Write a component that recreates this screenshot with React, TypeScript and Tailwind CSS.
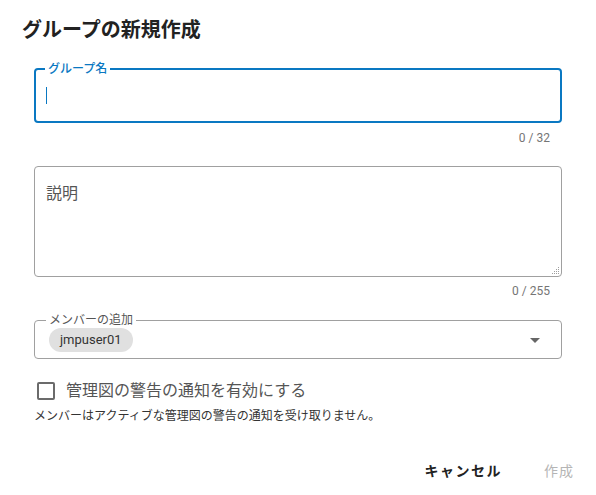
import React from 'react';

const font = { fontFamily: 'Roboto, "Noto Sans CJK JP", sans-serif' };

function ArrowDropDown() {
  return (
    <svg className="w-6 h-6 text-[#666]" viewBox="0 0 24 24" fill="currentColor">
      <path d="M7 10l5 5 5-5z" />
    </svg>
  );
}

function ResizeGrip() {
  return (
    <svg className="w-[9px] h-[9px]" viewBox="0 0 9 9" fill="#9e9e9e">
      <rect x="7" y="1" width="1" height="1" />
      <rect x="5" y="3" width="1" height="1" />
      <rect x="7" y="3" width="1" height="1" />
      <rect x="3" y="5" width="1" height="1" />
      <rect x="5" y="5" width="1" height="1" />
      <rect x="7" y="5" width="1" height="1" />
      <rect x="1" y="7" width="1" height="1" />
      <rect x="3" y="7" width="1" height="1" />
      <rect x="5" y="7" width="1" height="1" />
      <rect x="7" y="7" width="1" height="1" />
    </svg>
  );
}

export default function App() {
  return (
    <div className="w-[596px] h-[495px] bg-white overflow-hidden text-[#222]" style={font}>
      <div className="pt-[16px] pl-[22px] text-[20px] leading-[28px] font-bold text-[#222]">
        グループの新規作成
      </div>

      <div className="pl-[34px] pr-[34px] pt-[17px]">
        {/* group name */}
        <fieldset className="border-2 border-[#0a78c2] rounded-[4px] h-[62px] px-[8px] m-0">
          <legend className="px-[3px] text-[12px] leading-[16px] font-medium text-[#0a78c2] ml-[1px]">
            グループ名
          </legend>
          <div className="w-px h-[17px] bg-[#0a78c2] ml-[2px] mt-[10px]" />
        </fieldset>
        <div className="text-right pr-[12px] text-[12px] leading-[16px] text-[#757575] mt-[7px]">0 / 32</div>

        {/* description */}
        <div className="relative mt-[20px] border border-[#a0a0a0] rounded-[4px] h-[111px] px-[11px] pt-[15px]">
          <div className="text-[16px] leading-[24px] text-[#555]">説明</div>
          <div className="absolute right-[1px] bottom-[1px]">
            <ResizeGrip />
          </div>
        </div>
        <div className="text-right pr-[12px] text-[12px] leading-[16px] text-[#757575] mt-[6px]">0 / 255</div>

        {/* members */}
        <fieldset className="mt-[13px] border border-[#a0a0a0] rounded-[4px] h-[47px] pl-[14px] pr-[14px] m-0 flex">
          <legend className="px-[3px] ml-[-3px] text-[12px] leading-[16px] text-[#555]">メンバーの追加</legend>
          <div className="flex items-center justify-between w-full -mt-[7px]">
            <span className="inline-flex items-center h-[24px] px-[11px] rounded-full bg-[#e0e0e0] text-[13px] text-[#333]">
              jmpuser01
            </span>
            <ArrowDropDown />
          </div>
        </fieldset>

        {/* checkbox */}
        <label className="flex items-center mt-[22px] ml-[3px]">
          <span className="w-[18px] h-[18px] border-2 border-[#6b6b6b] rounded-[2px]" />
          <span className="ml-[11px] text-[16px] leading-[20px] text-[#555]">管理図の警告の通知を有効にする</span>
        </label>
        <div className="mt-[7px] text-[12px] leading-[16px] text-[#333]">
          メンバーはアクティブな管理図の警告の通知を受け取りません。
        </div>
      </div>

      <div className="flex justify-end items-center pr-[22px] mt-[37px] gap-[42px]">
        <button className="text-[14px] font-bold tracking-[1.5px] text-[#222]">キャンセル</button>
        <button className="text-[14px] text-[#b5b5b5] tracking-[1px]" disabled>作成</button>
      </div>
    </div>
  );
}
